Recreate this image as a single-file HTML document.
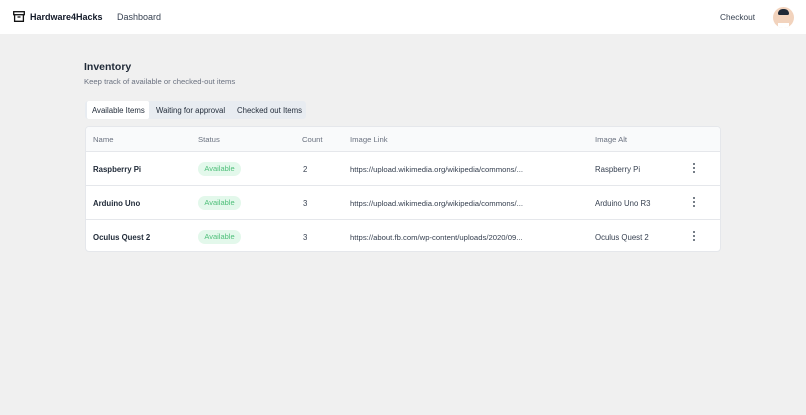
<!DOCTYPE html>
<html><head><style>
*{margin:0;padding:0;box-sizing:border-box}
body{width:806px;height:415px;background:#f0f0f0;font-family:"Liberation Sans",sans-serif;position:relative;overflow:hidden;color:#111827}
.hdr{position:absolute;left:0;top:0;width:806px;height:34px;background:#fff}
.t{position:absolute;white-space:nowrap}
.card{position:absolute;left:85px;top:126px;width:636px;height:126px;background:#fff;border:1px solid #e5e7eb;border-radius:4px;overflow:hidden}
.th{position:absolute;left:0;top:0;width:100%;height:25px;background:#f9fafb;border-bottom:1px solid #e5e7eb}
.row{position:absolute;left:0;width:100%;height:34px;border-bottom:1px solid #e5e7eb}
.row .t{font-size:7.8px}
.row .l{font-size:7.7px}
.badge{position:absolute;left:112px;top:10px;width:43px;height:14px;border-radius:7px;background:#e3f8eb;color:#4fbf7a;font-size:7.5px;line-height:14px;text-align:center}
.dots{position:absolute;left:607px;top:11px;width:3px}
.dots i{display:block;width:2.3px;height:2.3px;background:#4b5563;border-radius:50%;margin-bottom:1.6px}
</style></head><body>
<div class="hdr">
<svg class="t" style="left:13px;top:11px" width="12" height="11" viewBox="0 0 12 11"><rect x="0.7" y="0.7" width="10.6" height="3" fill="none" stroke="#111" stroke-width="1.3"/><path d="M1.6 3.7V10.3H10.4V3.7M4.5 6H7.5" fill="none" stroke="#111" stroke-width="1.3"/></svg>
<div class="t" style="left:30px;top:12px;font-size:9px;font-weight:bold">Hardware4Hacks</div>
<div class="t" style="left:117px;top:12px;font-size:9px;color:#374151">Dashboard</div>
<div class="t" style="left:720px;top:12px;font-size:8.3px;color:#374151">Checkout</div>
<div class="t" style="left:773px;top:7px;width:21px;height:21px;border-radius:50%;background:#f2d3bd;overflow:hidden"><div style="position:absolute;left:5px;top:2px;width:11px;height:6px;background:#1f2937;border-radius:6px 6px 2px 2px"></div><div style="position:absolute;left:5px;top:16px;width:11px;height:5px;background:#fff"></div></div>
</div>
<div class="t" style="left:84px;top:61px;font-size:10.5px;font-weight:bold;color:#1f2937">Inventory</div>
<div class="t" style="left:84px;top:77px;font-size:7.7px;color:#6b7280">Keep track of available or checked-out items</div>
<div class="t" style="left:85px;top:101px;width:221px;height:18px;background:#e8ecf1;border-radius:3px"></div>
<div class="t" style="left:87px;top:101px;width:62px;height:18px;background:#fff;border-radius:2px"></div>
<div class="t" style="left:92px;top:106px;font-size:7.8px;color:#1f2937">Available Items</div>
<div class="t" style="left:156px;top:106px;font-size:7.8px;color:#1f2937">Waiting for approval</div>
<div class="t" style="left:237px;top:106px;font-size:7.8px;color:#1f2937">Checked out Items</div>
<div class="card">
<div class="th">
<div class="t" style="left:7px;top:8px;font-size:7.7px;color:#6b7280">Name</div>
<div class="t" style="left:112px;top:8px;font-size:7.7px;color:#6b7280">Status</div>
<div class="t" style="left:216px;top:8px;font-size:7.7px;color:#6b7280">Count</div>
<div class="t" style="left:264px;top:8px;font-size:7.7px;color:#6b7280">Image Link</div>
<div class="t" style="left:509px;top:8px;font-size:7.7px;color:#6b7280">Image Alt</div>
</div>
<div class="row" style="top:25px">
<div class="t" style="left:7px;top:13px;font-weight:bold;color:#1f2937">Raspberry Pi</div><div class="badge">Available</div>
<div class="t" style="left:217px;top:13px;color:#374151">2</div>
<div class="t l" style="left:264px;top:13px;color:#374151">https://upload.wikimedia.org/wikipedia/commons/...</div>
<div class="t" style="left:509px;top:13px;color:#374151">Raspberry Pi</div>
<div class="dots"><i></i><i></i><i></i></div></div>
<div class="row" style="top:59px">
<div class="t" style="left:7px;top:13px;font-weight:bold;color:#1f2937">Arduino Uno</div><div class="badge">Available</div>
<div class="t" style="left:217px;top:13px;color:#374151">3</div>
<div class="t l" style="left:264px;top:13px;color:#374151">https://upload.wikimedia.org/wikipedia/commons/...</div>
<div class="t" style="left:509px;top:13px;color:#374151">Arduino Uno R3</div>
<div class="dots"><i></i><i></i><i></i></div></div>
<div class="row" style="top:93px;border-bottom:none">
<div class="t" style="left:7px;top:13px;font-weight:bold;color:#1f2937">Oculus Quest 2</div><div class="badge">Available</div>
<div class="t" style="left:217px;top:13px;color:#374151">3</div>
<div class="t l" style="left:264px;top:13px;color:#374151">https://about.fb.com/wp-content/uploads/2020/09...</div>
<div class="t" style="left:509px;top:13px;color:#374151">Oculus Quest 2</div>
<div class="dots"><i></i><i></i><i></i></div></div>
</div>
</body></html>
